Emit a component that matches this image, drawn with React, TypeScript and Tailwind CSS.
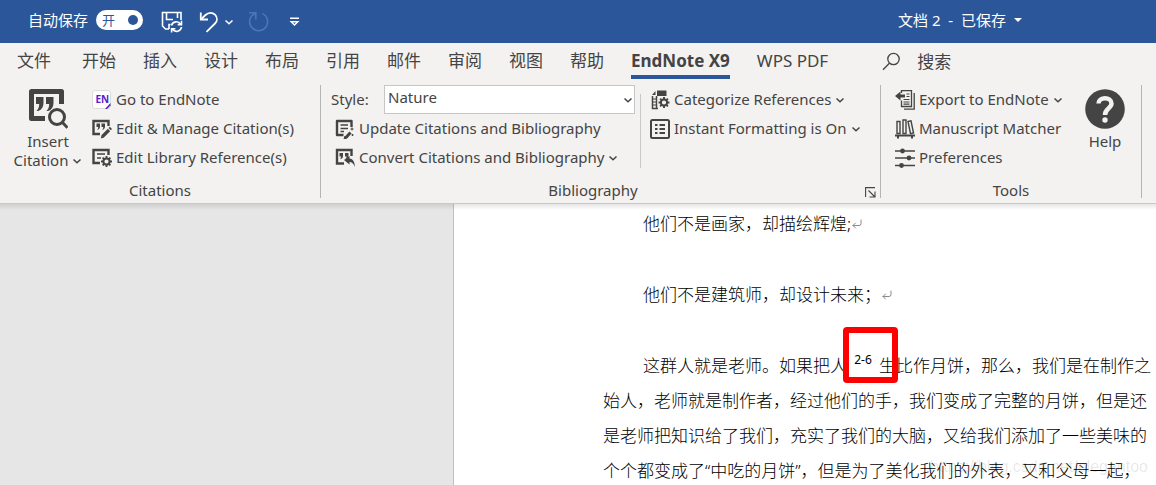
import { useState } from 'react'
import type { ReactNode } from 'react'
import { CornerDownLeft } from 'lucide-react'

const TABS = ['文件', '开始', '插入', '设计', '布局', '引用', '邮件', '审阅', '视图', '帮助', 'EndNote X9', 'WPS PDF']
const STYLES = ['Nature', 'Annotated', 'APA 6th', 'Vancouver']

export default function App() {
  const [tab, setTab] = useState('EndNote X9')

  return (
    <div className="h-screen flex flex-col overflow-hidden bg-[#e6e6e6] text-[#444444] font-['Noto_Sans','Noto_Sans_CJK_SC',sans-serif]">
      <TitleBar />

      {/* Ribbon tabs */}
      <nav className="h-[37px] flex-shrink-0 flex items-start bg-[#f3f2f1] pl-[17px] text-[17px] leading-[35px] whitespace-nowrap">
        {TABS.map((t, i) => (
          <button
            key={t}
            type="button"
            onClick={() => setTab(t)}
            className={`h-9 border-b-4 ${i === 0 ? 'mr-[31px]' : 'mr-[27px]'} ${t === tab ? 'font-bold border-[#2b579a]' : 'border-transparent'}`}
          >
            {t}
          </button>
        ))}
        <button type="button" className="ml-[27px] h-9 flex items-center gap-4">
          <svg className="w-[19px] h-[19px]" viewBox="0 0 19 19" fill="none" stroke="currentColor" strokeWidth="1.3">
            <circle cx="11.5" cy="7" r="5.7" />
            <path d="M7.4 11.2L1 17.8" />
          </svg>
          搜索
        </button>
      </nav>

      <Ribbon />
      <Document />
    </div>
  )
}

function TitleBar() {
  const [autoSave, setAutoSave] = useState(true)

  return (
    <header className="h-[43px] flex-shrink-0 flex items-center bg-[#2b579a] text-white pl-7 pb-1 text-[15px] leading-5 whitespace-nowrap">
      <label className="flex items-center gap-2">
        自动保存
        <input type="checkbox" className="sr-only" checked={autoSave} onChange={e => setAutoSave(e.target.checked)} />
        <span className="w-[47px] h-5 rounded-full bg-white text-[#2b579a] text-[13px] flex items-center justify-between pl-1.5 pr-[5px]" aria-hidden>
          开
          <span className="w-2.5 h-2.5 rounded-full bg-[#2b579a]" />
        </span>
      </label>

      <button type="button" aria-label="保存" className="ml-[18px] mt-1">
        <svg className="w-[22px] h-[22px]" viewBox="0 0 22 22" fill="none" stroke="currentColor" strokeWidth="1.6">
          <path d="M8 18H4.5L1.5 15V1.5H20V9" />
          <path d="M5.5 2V8.5H12M16.5 2V7" />
          <path d="M8 18V13.5H9.5" />
          <path d="M10.5 14.5A5 5 0 0 1 19.5 13M20.5 9.8V13.6H16.7M20.5 16A5 5 0 0 1 11.5 18.3M10.6 21.5V17.8H14.4" />
        </svg>
      </button>
      <button type="button" aria-label="撤消" className="ml-4 mt-1">
        <svg className="w-5 h-[22px]" viewBox="0 0 20 22" fill="none" stroke="currentColor" strokeWidth="1.8">
          <path d="M1.8 1.5V8.5H9" />
          <path d="M2.2 8.2L6.5 4C9.5 1.2 13.5 1.2 16 3.7C18.6 6.3 18.5 10 16 12.5L7.5 20.8" />
        </svg>
      </button>
      <Chevron className="ml-[5px] mt-1 w-2.5 h-2.5" />
      <button type="button" aria-label="重复" className="ml-3.5 mt-1 text-[#4f76b3]" disabled>
        <svg className="w-[21px] h-[21px]" viewBox="0 0 21 21" fill="none" stroke="currentColor" strokeWidth="1.6">
          <path d="M1 1.8H7.8V8.5" />
          <path d="M7.2 2.4A9 9 0 1 0 14.5 2.6" />
        </svg>
      </button>
      <button type="button" aria-label="自定义快速访问工具栏" className="ml-5 mt-1">
        <svg className="w-[11px] h-[10px]" viewBox="0 0 11 10" fill="none" stroke="currentColor" strokeWidth="1.4">
          <path d="M1 1.2H10M2.2 4.8L5.5 8L8.8 4.8Z" />
        </svg>
      </button>

      <div className="ml-auto mr-[134px] flex items-center gap-2">
        <span>文档 2&nbsp; -&nbsp; 已保存</span>
        <svg className="w-2 h-1" viewBox="0 0 8 4" fill="currentColor"><path d="M0 0H8L4 4Z" /></svg>
      </div>
    </header>
  )
}

function Ribbon() {
  const [style, setStyle] = useState('Nature')

  return (
    <div className="h-[124px] flex-shrink-0 flex bg-[#f3f2f1] border-b border-[#c8c8c8] pt-[5px] text-[15px] leading-[19px] whitespace-nowrap">
      <Group label="Citations" className="w-[321px]">
        <button type="button" className="w-[70px] ml-[13px] mr-[9px] mt-1 flex flex-col items-center">
          <svg className="w-10 h-10 mb-[3px]" viewBox="0 0 40 40" fill="none" stroke="currentColor">
            <path d="M33.5 15V2.5H3.5V29.5H17" strokeWidth="5" strokeLinejoin="round" />
            <path d="M8 8h7.5v5.5c0 4.5-2 7.5-5.5 8.5H8.5c1.8-2 2.7-4 2.700-7H8zM18 8h7.5v5.5c0 4.5-2 7.500-5.5 8.500h-1.500c1.800-2 2.700-4 2.700-7H18z" fill="currentColor" stroke="none" />
            <circle cx="29" cy="28" r="7.5" strokeWidth="3" />
            <path d="M34.5 33.5L39.5 38.8" strokeWidth="3" />
          </svg>
          Insert
          <span className="flex items-center gap-1">Citation <Chevron className="w-2.5 h-2.5" /></span>
        </button>
        <div>
          <Command icon={<EndNoteIcon />}>Go to EndNote</Command>
          <Command icon={<EditCitationIcon />}>Edit &amp; Manage Citation(s)</Command>
          <Command icon={<EditLibraryIcon />}>Edit Library Reference(s)</Command>
        </div>
      </Group>

      <Group label="Bibliography" className="w-[560px]" launcher>
        <div className="w-[319px] pl-2.5">
          <div className="h-[29px] flex items-center">
            <label htmlFor="style" className="w-[53px]">Style:</label>
            <div className="relative">
              <select
                id="style"
                value={style}
                onChange={e => setStyle(e.target.value)}
                className="appearance-none block w-[251px] h-[29px] bg-white border border-[#c6c6c6] pl-[3px] pb-1 outline-none"
              >
                {STYLES.map(s => <option key={s}>{s}</option>)}
              </select>
              <Chevron className="absolute right-0.5 top-2.5 w-2.5 h-2.5 pointer-events-none" />
            </div>
          </div>
          <div className="pl-1">
            <Command icon={<UpdateIcon />}>Update Citations and Bibliography</Command>
            <Command icon={<ConvertIcon />} menu>Convert Citations and Bibliography</Command>
          </div>
        </div>
        <div className="h-[74px] mt-[9px] pl-[9px] border-l border-[#c8c8c8]">
          <div className="-mt-[9px]">
            <Command icon={<CategorizeIcon />} menu>Categorize References</Command>
            <Command icon={<FormattingIcon />} menu>Instant Formatting is On</Command>
          </div>
        </div>
      </Group>

      <Group label="Tools" className="w-[261px]">
        <div className="w-[200px] pl-3.5">
          <Command icon={<ExportIcon />} menu>Export to EndNote</Command>
          <Command icon={<MatcherIcon />}>Manuscript Matcher</Command>
          <Command icon={<PreferencesIcon />}>Preferences</Command>
        </div>
        <button type="button" className="w-12 mt-1 flex flex-col items-center">
          <svg className="w-10 h-10 mb-[3px]" viewBox="0 0 40 40" fill="none">
            <circle cx="20" cy="20" r="19.8" fill="#444444" />
            <path d="M13.5 14.5C13.5 7.5 26.5 7.5 26.5 14.5C26.5 19.5 20 19 20 26" stroke="#f3f2f1" strokeWidth="4.5" />
            <circle cx="20" cy="31" r="2.7" fill="#f3f2f1" />
          </svg>
          Help
        </button>
      </Group>
    </div>
  )
}

function Group({ label, className, launcher, children }: { label: string; className: string; launcher?: boolean; children: ReactNode }) {
  return (
    <section className={`flex-shrink-0 flex flex-col pb-[5px] ${className}`}>
      <div className="flex-1 flex flex-col border-r border-[#b5b5b5]">
        <div className="flex flex-shrink-0 h-[97px]">{children}</div>
        <div className="flex items-center leading-4">
          <h2 className="flex-1 text-center">{label}</h2>
          {launcher && (
            <button type="button" aria-label={`${label} options`} className="mr-1 mt-1">
              <svg className="w-[11px] h-[11px]" viewBox="0 0 11 11" fill="none" stroke="currentColor" strokeWidth="1.1">
                <path d="M.6 10V.6H10" />
                <path d="M3.5 3.5L9.5 9.5M10 4.5V10H4.5" />
              </svg>
            </button>
          )}
        </div>
      </div>
    </section>
  )
}

function Command({ icon, menu, children }: { icon: ReactNode; menu?: boolean; children: ReactNode }) {
  return (
    <button type="button" className="h-[29px] flex items-center">
      <span className="w-5 h-5 mr-1">{icon}</span>
      {children}
      {menu && <Chevron className="ml-1 w-2.5 h-2.5" />}
    </button>
  )
}

function Chevron({ className }: { className: string }) {
  return (
    <svg className={className} viewBox="0 0 10 10" fill="none" stroke="currentColor" strokeWidth="1.5" aria-hidden>
      <path d="M1.5 3.5L5 6.8L8.5 3.5" />
    </svg>
  )
}

function Icon({ children }: { children: ReactNode }) {
  return (
    <svg className="w-5 h-5" viewBox="0 0 20 20" fill="none" stroke="currentColor" strokeWidth="2" aria-hidden>
      {children}
    </svg>
  )
}

function EndNoteIcon() {
  return (
    <Icon>
      <rect x="0.5" y="0.5" width="18" height="18" rx="2.5" fill="#ffffff" stroke="#dcdcdc" strokeWidth="1" />
      <text x="3.5" y="12.5" fontSize="10" fontWeight="700" fill="#5a1bd0" stroke="none">EN</text>
      <path d="M18.5 13V15.5L15 19H13Z" fill="#5a1bd0" stroke="none" />
    </Icon>
  )
}

function EditCitationIcon() {
  return (
    <Icon>
      <path d="M16.5 7V2H1.5V15H8" strokeWidth="2.4" />
      <path d="M4.5 4.5H8V7.5C8 9.5 7 10.5 5.2 11.2C6 10 6.2 9 6.2 8H4.5ZM9.5 4.5H13V7.5C13 9.5 12 10.5 10.2 11.2C11 10 11.2 9 11.2 8H9.5Z" fill="currentColor" stroke="none" />
      <path d="M10.5 17.5L17 11" strokeWidth="3.2" />
      <path d="M8.8 19.5L9.5 16.3L12 18.6ZM16.5 9L17.8 7.8L20 10L18.7 11.3Z" fill="currentColor" stroke="none" />
    </Icon>
  )
}

function Gear({ x, y }: { x: number; y: number }) {
  return (
    <g transform={`translate(${x} ${y})`}>
      <circle r="3.1" strokeWidth="2" />
      <path d="M0-5.5V-3.5M0 3.5V5.5M-5.5 0H-3.5M3.5 0H5.5M-3.9-3.9L-2.6-2.6M2.6 2.6L3.9 3.9M-3.9 3.9L-2.6 2.6M2.6-2.6L3.9-3.9" strokeWidth="1.9" />
    </g>
  )
}

function EditLibraryIcon() {
  return (
    <Icon>
      <path d="M16.5 7V2H1.5V15H8" strokeWidth="2.4" />
      <path d="M5 6H13M5 10H9" strokeWidth="1.7" />
      <Gear x={14.5} y={13.5} />
    </Icon>
  )
}

function UpdateIcon() {
  return (
    <Icon>
      <path d="M16.5 8V2H2V16H8.5" strokeWidth="2.4" strokeLinejoin="round" />
      <path d="M5.5 6H13M5.5 9.5H13M5.5 12.5H9" strokeWidth="1.7" />
      <path d="M11 18.5L15.5 13.5" strokeWidth="3" />
      <path d="M9 20L10 17L12 19ZM17 8.5V11.5M15.5 10H18.5M17.5 15V17M16.5 16H18.5" fill="currentColor" strokeWidth="1" />
    </Icon>
  )
}

function ConvertIcon() {
  return (
    <Icon>
      <path d="M16.5 8V2H2V15.5H9" strokeWidth="2.4" />
      <path d="M4.5 5H8V8C8 9.8 7 10.8 5.2 11.3L6.2 8.5H4.5ZM10 5H13.5V8C13.5 9.8 12.5 10.5 10.7 11L11.7 8.5H10Z" fill="currentColor" stroke="none" />
      <path d="M9 12L14.5 8V10.5C18 11 19.8 14 20 19C18.5 15.5 17 14 14.5 14V16.5Z" fill="currentColor" stroke="none" />
    </Icon>
  )
}

function CategorizeIcon() {
  return (
    <Icon>
      <path d="M7 0.5H16.5V6H7ZM2 5L5.5 1V5Z" fill="currentColor" stroke="none" />
      <path d="M2.5 6V18.5H8M6.5 6V18" strokeWidth="1.5" />
      <path d="M2 9H6M2 12H6M2 15H6" strokeWidth="1.2" />
      <circle cx="14" cy="12.5" r="6.5" fill="#f3f2f1" stroke="none" />
      <Gear x={14} y={12.5} />
    </Icon>
  )
}

function FormattingIcon() {
  return (
    <Icon>
      <rect x="1" y="1" width="18" height="18" rx="1.5" />
      <path d="M5 6H7.5M5 10H7.5M5 14H7.5M9.5 6H15M9.5 10H15M9.5 14H15" />
    </Icon>
  )
}

function ExportIcon() {
  return (
    <Icon>
      <path d="M0 6L5.5 1.5V4.5H10V7.5H5.5V10.5Z" fill="currentColor" stroke="none" />
      <path d="M6.5 3V0.7H16.5V16.5H6.5V10.5" strokeWidth="1.3" />
      <path d="M9 19.2H19.2V3" strokeWidth="1.3" />
      <path d="M11.5 4H14.5M11.5 6.5H14.5M8.5 9.5H14.5M8.5 12H14.5M8.5 14.2H14.5" strokeWidth="1.2" />
    </Icon>
  )
}

function MatcherIcon() {
  return (
    <Icon>
      <path d="M2 2.5H5V14.5H2ZM8 1H11V14.5H8ZM13 2.5L16 1.8L18.5 14L15.5 14.6Z" strokeWidth="1.4" />
      <path d="M0 16.5H20" />
      <path d="M3 17V19.5M17 17V19.5" />
    </Icon>
  )
}

function PreferencesIcon() {
  return (
    <Icon>
      <path d="M0 3H20M0 10H20M0 17.5H20" strokeWidth="1.7" />
      <g fill="currentColor" stroke="none">
        <circle cx="7.5" cy="3" r="2.4" />
        <circle cx="14" cy="10" r="2.4" />
        <circle cx="6.5" cy="17.5" r="2.4" />
      </g>
    </Icon>
  )
}

function Document() {
  return (
    <main className="flex-1 min-h-0 relative flex overflow-hidden">
      <div className="w-[453px] flex-shrink-0" />
      <article className="flex-1 min-w-0 bg-white border-l border-[#c0c0c0] pl-[149px] pt-0.5 overflow-hidden text-black text-[17px] leading-[35px] font-light whitespace-nowrap">
        <p className="pl-10 flex items-center">他们不是画家，却描绘辉煌;<Return /></p>
        <p className="mt-9 pl-10 flex items-center">他们不是建筑师，却设计未来；<Return /></p>
        <div className="mt-9">
          <p className="pl-10">
            这群人就是老师。如果把人
            <span className="relative inline-block w-8 h-[35px] align-top text-center text-xs leading-6 font-normal">
              2-6
              <span className="absolute -left-1 -top-[21px] w-[55px] h-14 rounded-sm border-6 border-[#ff0000]" aria-hidden />
            </span>
            生比作月饼，那么，我们是在制作之
          </p>
          <p>始人，老师就是制作者，经过他们的手，我们变成了完整的月饼，但是还</p>
          <p>是老师把知识给了我们，充实了我们的大脑，又给我们添加了一些美味的</p>
          <p>个个都变成了“中吃的月饼”，但是为了美化我们的外表，又和父母一起，</p>
        </div>
      </article>

      {/* Shadow the ribbon throws on the page */}
      <div className="absolute inset-x-0 top-0 h-1.5 bg-gradient-to-b from-black/10 to-transparent" />
      <span className="absolute right-2 bottom-1.5 text-base text-black/10 font-['Liberation_Sans',sans-serif]">https://blog.csdn.net/elegantoo</span>
    </main>
  )
}

function Return() {
  return <CornerDownLeft className="w-3 h-3 text-[#8a8a8a]" strokeWidth={2} aria-hidden />
}
